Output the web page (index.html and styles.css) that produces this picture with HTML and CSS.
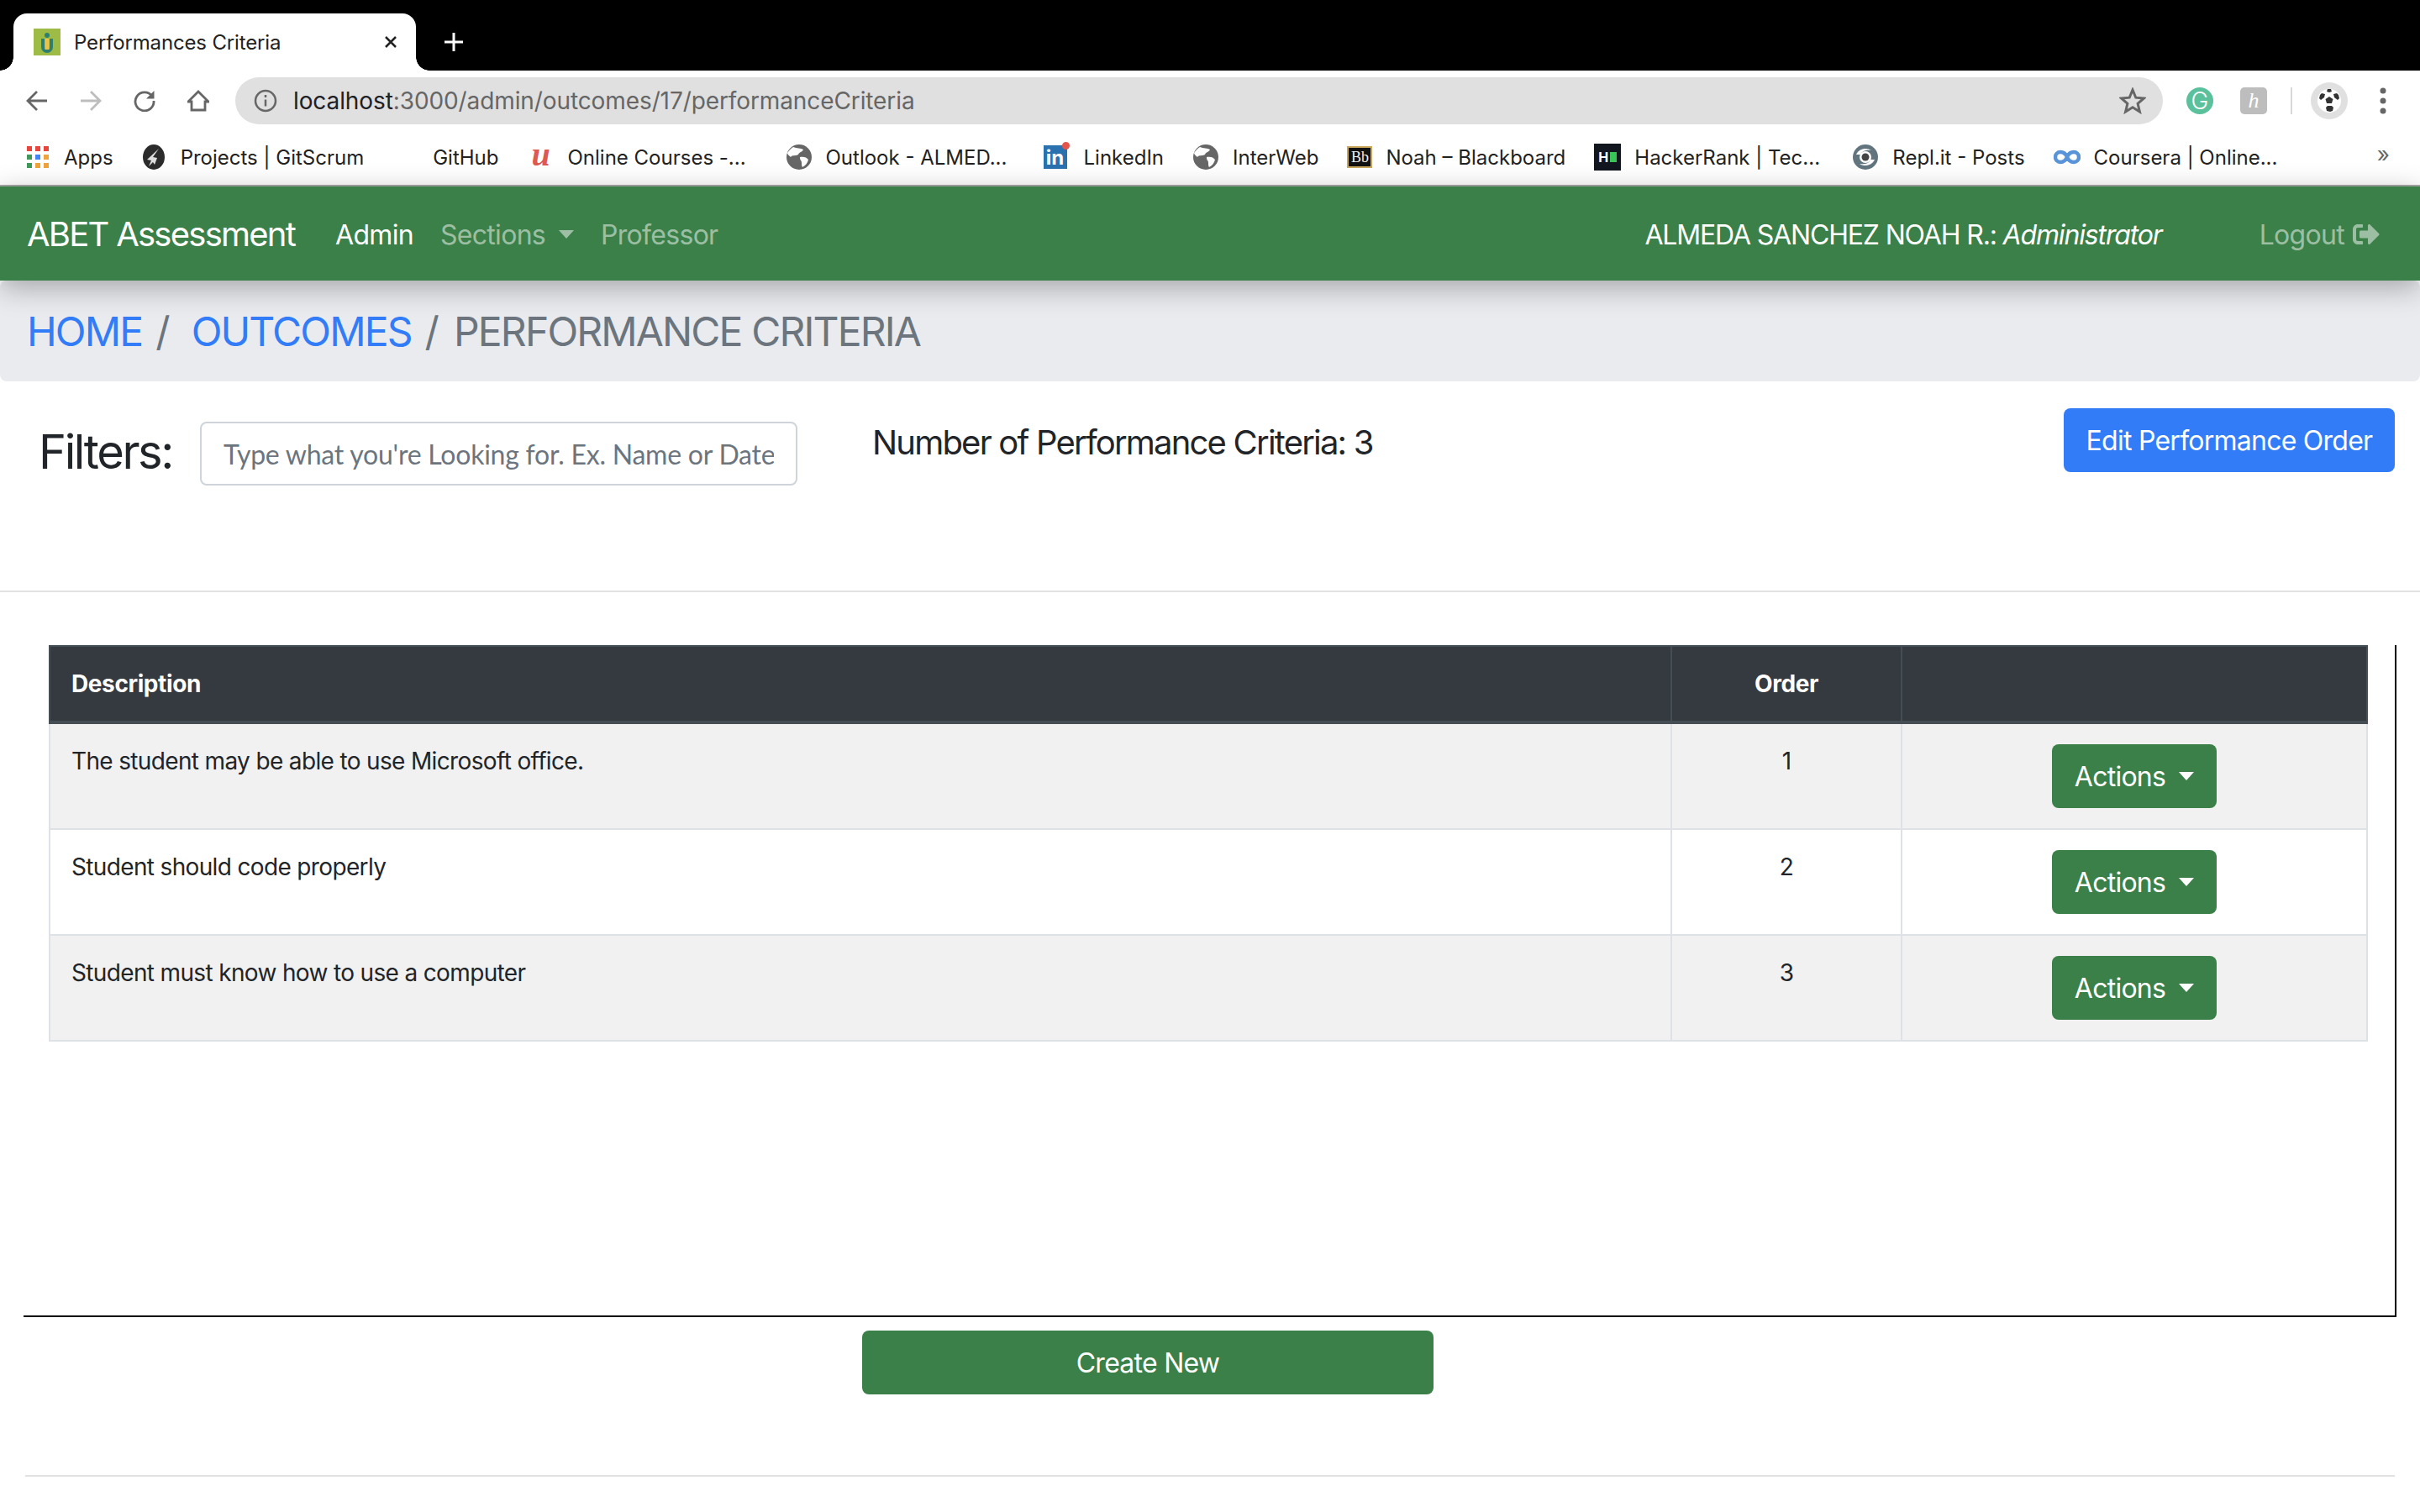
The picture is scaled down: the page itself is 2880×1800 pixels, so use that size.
FILE: index.html
```html
<!DOCTYPE html>
<html lang="en">
<head>
  <meta charset="UTF-8">
  <title>Performances Criteria</title>
  <link rel="stylesheet" href="styles.css">
</head>
<body>

<svg class="defs" width="0" height="0">
  <symbol id="globe" viewBox="0 0 32 32">
    <circle cx="16" cy="16" r="15" fill="#666"/>
    <path d="M9 4c4 2 9 1 12 3-1 3-5 3-6 6-3 2-7 0-9 3-2-2-4-3-4-5 2-3 4-5 7-7zM17 16c4-1 8 0 10 3-1 4-3 7-7 9-2-3 0-6-2-8-1-1-1-3-1-4z" fill="#fff"/>
  </symbol>
</svg>

<!-- browser tabs -->
<div class="tabstrip">
  <div class="tab">
    <svg class="favicon" viewBox="0 0 32 32">
      <rect width="32" height="32" fill="#9dbb45"/>
      <path d="M9 12v10a7 7 0 0 0 14 0V12h-4v10a3 3 0 0 1-6 0V12z" fill="#2f7f6f"/>
      <rect x="13.5" y="12" width="5" height="13" fill="#eec24a"/>
      <circle cx="16" cy="8" r="3" fill="#2f7f6f"/>
    </svg>
    <span class="tab-title">Performances Criteria</span>
    <svg class="tab-close" viewBox="0 0 16 16"><path d="M2 2l12 12M14 2L2 14"/></svg>
  </div>
  <svg class="new-tab" viewBox="0 0 24 24"><path d="M12 1v22M1 12h22"/></svg>
</div>

<!-- url bar -->
<div class="toolbar">
  <div class="nav-btn">
    <svg class="ic" viewBox="0 0 26 26"><path d="M25 13H3M13 2L2 13l11 11"/></svg>
  </div>
  <div class="nav-btn">
    <svg class="ic ic-off" viewBox="0 0 26 26"><path d="M1 13h22M13 2l11 11-11 11"/></svg>
  </div>
  <div class="nav-btn">
    <svg class="ic" viewBox="0 0 26 26">
      <path d="M22 7.5A11 11 0 1 0 24 13"/>
      <path class="ic-solid" d="M24.500 1v9.500H15z"/>
    </svg>
  </div>
  <div class="nav-btn">
    <svg class="ic" viewBox="0 0 26 26"><path d="M13 2L25 14h-4v10H5V14H1z"/></svg>
  </div>
  <div class="urlbar">
    <svg class="url-info" viewBox="0 0 28 28">
      <circle cx="14" cy="14" r="12"/>
      <path d="M14 12.500v8M14 7v3"/>
    </svg>
    <span class="url-text"><span class="url-host">localhost</span>:3000/admin/outcomes/17/performanceCriteria</span>
    <svg class="url-star" viewBox="0 0 32 32"><path d="M16 3l3.800 9.200 9.700.8-7.400 6.400 2.300 9.600L16 23.800 7.600 29l2.300-9.600L2.500 13l9.700-.8z"/></svg>
  </div>
  <div class="ext-icons">
    <span class="ext-grammarly">G</span>
    <span class="ext-honey">h</span>
    <span class="ext-sep"></span>
    <svg class="ext-avatar" viewBox="0 0 44 44">
      <circle cx="22" cy="22" r="22" fill="#e0e0e0"/>
      <circle cx="22" cy="22" r="14" fill="#fff"/>
      <path d="M22 17l4.500 3-1.500 5h-6l-1.500-5zM13 13l4 1-1 4-4 3-2-2 1-4zM31 13l-4 1 1 4 4 3 2-2-1-4zM18 30l2-2h5l2 2-1 4-3 1-4-1zM20 8h4l1 3-3 1-3-1z" fill="#333"/>
    </svg>
    <svg class="ext-menu" viewBox="0 0 8 32">
      <circle cx="4" cy="4" r="3.500"/><circle cx="4" cy="16" r="3.500"/><circle cx="4" cy="28" r="3.500"/>
    </svg>
  </div>
</div>

<!-- bookmarks -->
<div class="bookmarks">
  <div class="bookmark bookmark-apps">
    <svg class="bm-apps" viewBox="0 0 26 26">
      <rect x="0" y="0" width="6" height="6" fill="#e8453c"/><rect x="10" y="0" width="6" height="6" fill="#e8453c"/><rect x="20" y="0" width="6" height="6" fill="#e8453c"/>
      <rect x="0" y="10" width="6" height="6" fill="#3f9a5a"/><rect x="10" y="10" width="6" height="6" fill="#4285f4"/><rect x="20" y="10" width="6" height="6" fill="#eea43a"/>
      <rect x="0" y="20" width="6" height="6" fill="#3f9a5a"/><rect x="10" y="20" width="6" height="6" fill="#eea43a"/><rect x="20" y="20" width="6" height="6" fill="#eea43a"/>
    </svg>
    <span class="bm-label">Apps</span>
  </div>
  <div class="bookmark">
    <svg class="bm-icon" viewBox="0 0 32 32">
      <ellipse cx="16" cy="16" rx="13" ry="15" fill="#2b2b2b"/>
      <path d="M22 6L8 19l5 1-3 7 5-5 2 3 3-8-5-1z" fill="#ddd"/>
    </svg>
    <span class="bm-label">Projects | GitScrum</span>
  </div>
  <div class="bookmark">
    <span class="bm-blank"></span>
    <span class="bm-label">GitHub</span>
  </div>
  <div class="bookmark">
    <span class="bm-udemy">u</span>
    <span class="bm-label bm-long">Online Courses -...</span>
  </div>
  <div class="bookmark">
    <svg class="bm-icon"><use href="#globe"/></svg>
    <span class="bm-label bm-long">Outlook - ALMED...</span>
  </div>
  <div class="bookmark">
    <span class="bm-linkedin">in</span>
    <span class="bm-label">LinkedIn</span>
  </div>
  <div class="bookmark">
    <svg class="bm-icon"><use href="#globe"/></svg>
    <span class="bm-label">InterWeb</span>
  </div>
  <div class="bookmark">
    <span class="bm-bb">Bb</span>
    <span class="bm-label">Noah – Blackboard</span>
  </div>
  <div class="bookmark">
    <span class="bm-hr">H<span class="bm-hr-block"></span></span>
    <span class="bm-label bm-long">HackerRank | Tec...</span>
  </div>
  <div class="bookmark">
    <svg class="bm-icon" viewBox="0 0 32 32">
      <circle cx="16" cy="16" r="15" fill="#62757f"/>
      <path d="M5 13c3-7 12-9 18-5-5-1-11 0-13 5M27 19c-3 7-12 9-18 5 5 1 11 0 13-5" fill="#fff"/>
      <circle cx="16" cy="16" r="7" fill="#fff"/>
      <circle cx="16" cy="16" r="4.500" fill="#444"/>
    </svg>
    <span class="bm-label">Repl.it - Posts</span>
  </div>
  <div class="bookmark">
    <svg class="bm-icon" viewBox="0 0 32 32">
      <path class="bm-coursera" d="M16 16c-2-5-5-6-8-6a6 6 0 0 0 0 12c3 0 6-1 8-6s5-6 8-6a6 6 0 0 1 0 12c-3 0-6-1-8-6z"/>
    </svg>
    <span class="bm-label">Coursera | Online...</span>
  </div>
  <span class="bm-more">»</span>
</div>

<!-- page -->
<nav class="navbar">
  <a class="brand">ABET Assessment</a>
  <a class="nav-link active">Admin</a>
  <a class="nav-link">Sections<span class="caret caret-nav"></span></a>
  <a class="nav-link">Professor</a>
  <span class="nav-user">ALMEDA SANCHEZ NOAH R.: <em>Administrator</em></span>
  <a class="nav-link nav-logout">Logout
    <svg class="logout-icon" viewBox="0 0 512 512"><path d="M497 273L329 441c-15 15-41 4.500-41-17v-96H152c-13.300 0-24-10.700-24-24v-96c0-13.300 10.700-24 24-24h136V88c0-21.400 25.900-32 41-17l168 168c9.300 9.400 9.300 24.600 0 34zM192 436v-40c0-6.600-5.400-12-12-12H96c-17.700 0-32-14.300-32-32V160c0-17.700 14.300-32 32-32h84c6.600 0 12-5.400 12-12V76c0-6.600-5.400-12-12-12H96c-53 0-96 43-96 96v192c0 53 43 96 96 96h84c6.600 0 12-5.400 12-12z"/></svg>
  </a>
</nav>

<div class="breadcrumb">
  <a class="crumb-link">HOME</a>
  <span class="crumb-sep">/</span>
  <a class="crumb-link">OUTCOMES</a>
  <span class="crumb-sep crumb-sep-last">/</span>
  <span class="crumb-current">PERFORMANCE CRITERIA</span>
</div>

<div class="filters">
  <span class="filters-label">Filters:</span>
  <input class="filters-input" type="text" placeholder="Type what you're Looking for. Ex. Name or Date">
  <span class="filters-count">Number of Performance Criteria: 3</span>
  <button class="btn btn-blue btn-order">Edit Performance Order</button>
</div>

<hr class="rule">

<div class="table-box">
  <table class="criteria">
    <colgroup>
      <col class="col-desc">
      <col class="col-order">
      <col class="col-actions">
    </colgroup>
    <thead>
      <tr>
        <th>Description</th>
        <th class="center">Order</th>
        <th></th>
      </tr>
    </thead>
    <tbody>
      <tr>
        <td>The student may be able to use Microsoft office.</td>
        <td class="center">1</td>
        <td class="center"><button class="btn btn-green">Actions<span class="caret"></span></button></td>
      </tr>
      <tr>
        <td>Student should code properly</td>
        <td class="center">2</td>
        <td class="center"><button class="btn btn-green">Actions<span class="caret"></span></button></td>
      </tr>
      <tr>
        <td>Student must know how to use a computer</td>
        <td class="center">3</td>
        <td class="center"><button class="btn btn-green">Actions<span class="caret"></span></button></td>
      </tr>
    </tbody>
  </table>
</div>

<div class="create-row">
  <button class="btn btn-green btn-create">Create New</button>
</div>

<hr class="rule rule-bottom">

</body>
</html>
```

FILE: styles.css
```css
* {
  box-sizing: border-box;
}
html, body {
  margin: 0;
  height: 1800px;
  overflow: hidden;
}
body {
  background-color: #fff;
  color: #212529;
  font-family: Inter, "Liberation Sans", sans-serif;
  font-size: 32px;
}
.defs {
  position: absolute;
}

/* browser chrome */
.tabstrip {
  background-color: #000;
  height: 84px;
  padding: 16px 0 0 16px;
  display: flex;
  align-items: flex-start;
}
.tab {
  position: relative;
  width: 479px;
  height: 68px;
  background-color: #fff;
  border-radius: 16px 16px 0 0;
  display: flex;
  align-items: center;
  padding: 0 22px 0 24px;
}
.tab::before, .tab::after {
  content: "";
  position: absolute;
  bottom: 0;
  width: 16px;
  height: 16px;
}
.tab::before {
  left: -16px;
  background: radial-gradient(circle at 0 0, #000 15.500px, #fff 16px);
}
.tab::after {
  right: -16px;
  background: radial-gradient(circle at 100% 0, #000 15.500px, #fff 16px);
}
.favicon {
  width: 32px;
  height: 32px;
  flex: none;
}
.tab-title {
  margin-left: 16px;
  font-size: 24px;
  letter-spacing: -0.15px;
  color: #222;
  flex: 1;
}
.tab-close {
  width: 16px;
  height: 18px;
  fill: none;
  stroke: #222;
  stroke-width: 2.500;
}
.new-tab {
  width: 24px;
  height: 24px;
  margin: 22px 0 0 33px;
  fill: none;
  stroke: #fff;
  stroke-width: 3;
}
.toolbar {
  height: 76px;
  padding: 8px 0 12px 12px;
  display: flex;
  align-items: center;
}
.nav-btn {
  width: 64px;
  display: flex;
  justify-content: center;
}
.ic {
  width: 26px;
  height: 26px;
  fill: none;
  stroke: #666;
  stroke-width: 2.800;
}
.ic-off {
  stroke: #bdbdbd;
}
.ic-solid {
  fill: #666;
  stroke: none;
}
.urlbar {
  width: 2294px;
  height: 56px;
  margin-left: 12px;
  background-color: #e0e0e0;
  border-radius: 28px;
  display: flex;
  align-items: center;
  padding: 0 20px 0 22px;
}
.url-info {
  width: 28px;
  height: 28px;
  fill: none;
  stroke: #666;
  stroke-width: 2.500;
  flex: none;
}
.url-text {
  margin-left: 19px;
  font-size: 28px;
  letter-spacing: -0.1px;
  color: #666;
  flex: 1;
}
.url-host {
  color: #202124;
}
.url-star {
  width: 32px;
  height: 32px;
  fill: none;
  stroke: #666;
  stroke-width: 3;
}
.ext-icons {
  display: flex;
  align-items: center;
  margin-left: 28px;
}
.ext-grammarly {
  width: 32px;
  height: 32px;
  border-radius: 50%;
  background-color: #5ac19c;
  color: #fff;
  font-size: 28px;
  font-weight: 300;
  line-height: 32px;
  text-align: center;
}
.ext-honey {
  width: 32px;
  height: 32px;
  margin-left: 32px;
  border-radius: 5px;
  background-color: #bdbdbd;
  color: #fff;
  font-family: "Liberation Serif", serif;
  font-style: italic;
  font-size: 26px;
  line-height: 32px;
  text-align: center;
}
.ext-sep {
  width: 2px;
  height: 32px;
  margin-left: 28px;
  background-color: #d8d8d8;
}
.ext-avatar {
  width: 44px;
  height: 44px;
  margin-left: 22px;
}
.ext-menu {
  width: 8px;
  height: 32px;
  margin-left: 38px;
  fill: #666;
}
.bookmarks {
  height: 62px;
  padding: 0 0 6px 32px;
  border-bottom: 2px solid #a8a8a8;
  display: flex;
  align-items: center;
  gap: 34px;
  position: relative;
}
.bookmark {
  display: flex;
  align-items: center;
  gap: 16px;
}
.bookmark-apps {
  gap: 18px;
  margin-right: -2px;
}
.bm-label {
  font-size: 24px;
  color: #222;
  white-space: nowrap;
}
.bm-long {
  min-width: 225px;
}
.bm-apps {
  width: 26px;
  height: 26px;
}
.bm-icon, .bm-blank {
  width: 32px;
  height: 32px;
  flex: none;
}
.bm-udemy {
  width: 32px;
  height: 32px;
  color: #dc5a52;
  font-family: "Liberation Serif", serif;
  font-style: italic;
  font-weight: bold;
  font-size: 40px;
  line-height: 26px;
  text-align: center;
}
.bm-linkedin {
  width: 28px;
  height: 28px;
  margin-right: 4px;
  background-color: #2a71b0;
  color: #fff;
  font-size: 24px;
  font-weight: bold;
  line-height: 30px;
  text-align: center;
  position: relative;
}
.bm-linkedin::after {
  content: "";
  position: absolute;
  top: -4px;
  right: -3px;
  width: 9px;
  height: 9px;
  border-radius: 50%;
  background-color: #e4544a;
}
.bm-bb {
  width: 30px;
  height: 26px;
  background-color: #111;
  border: 2px solid #c9a75b;
  color: #eee;
  font-family: "Liberation Serif", serif;
  font-size: 18px;
  line-height: 22px;
  text-align: center;
}
.bm-hr {
  width: 32px;
  height: 32px;
  background-color: #12171f;
  color: #fff;
  font-size: 16px;
  font-weight: bold;
  display: flex;
  align-items: center;
  justify-content: center;
  gap: 2px;
}
.bm-hr-block {
  width: 8px;
  height: 12px;
  background-color: #39c659;
}
.bm-coursera {
  fill: none;
  stroke: #5a94d8;
  stroke-width: 4.500;
}
.bm-more {
  position: absolute;
  right: 36px;
  top: 8px;
  color: #666;
  font-size: 26px;
}

/* page */
.navbar {
  position: relative;
  z-index: 2;
  height: 112px;
  background-color: #3a8048;
  box-shadow: 0 8px 32px rgba(0,0,0,0.3);
  padding: 0 32px;
  display: flex;
  align-items: center;
}
.brand {
  color: #fff;
  font-size: 40px;
  letter-spacing: -1.75px;
  margin-right: 32px;
}
.nav-link {
  color: rgba(255,255,255,0.5);
  letter-spacing: -0.7px;
  padding: 2px 16px 0;
}
.nav-link.active {
  color: #fff;
}
.nav-user {
  margin-left: auto;
  padding-top: 2px;
  color: #fff;
  letter-spacing: -1.16px;
}
.nav-logout {
  margin-left: 100px;
  display: flex;
  align-items: center;
  gap: 10px;
}
.logout-icon {
  width: 32px;
  height: 32px;
  fill: #9cbea3;
}
.caret {
  display: inline-block;
  margin-left: 16px;
  vertical-align: 7px;
  border-top: 10px solid currentColor;
  border-left: 9.600px solid transparent;
  border-right: 9.600px solid transparent;
}
.breadcrumb {
  height: 120px;
  background-color: #e9ebef;
  border-radius: 8px;
  padding: 0 32px;
  display: flex;
  align-items: center;
  font-size: 48px;
  letter-spacing: -1.85px;
}
.crumb-link {
  color: #337cf8;
}
.crumb-sep {
  color: #6c757d;
  margin: 0 27px 0 16px;
}
.crumb-sep-last {
  margin-right: 19px;
}
.crumb-current {
  color: #6c757d;
}
.filters {
  height: 249px;
  padding: 32px 30px 0 46px;
  display: flex;
  align-items: flex-start;
}
.filters-label {
  font-size: 56px;
  letter-spacing: -2.4px;
  margin-top: 18px;
  flex: none;
  width: 157px;
}
.filters-input {
  flex: none;
  width: 711px;
  height: 76px;
  margin: 16px 0 0 35px;
  border: 2px solid #ced4da;
  border-radius: 8px;
  padding: 0 26px;
  font-family: Lato, sans-serif;
  font-size: 32px;
  letter-spacing: -0.23px;
}
.filters-input::placeholder {
  color: #6c757d;
}
.filters-count {
  font-size: 40px;
  letter-spacing: -1.8px;
  margin: 16px 0 0 89px;
}
.btn {
  height: 76px;
  border: 0;
  border-radius: 8px;
  color: #fff;
  font-family: Inter, "Liberation Sans", sans-serif;
  font-size: 32px;
  letter-spacing: -0.75px;
}
.btn-blue {
  background-color: #337cf8;
}
.btn-green {
  background-color: #3a8048;
}
.btn-order {
  width: 394px;
  margin-left: auto;
}
.rule {
  height: 2px;
  margin: 0;
  border: 0;
  background-color: #e2e2e2;
}
.rule-bottom {
  margin: 96px 30px 0;
}
.table-box {
  height: 800px;
  margin: 63px 28px 0;
  padding-left: 30px;
  border-right: 2px solid #000;
  border-bottom: 2px solid #000;
}
.criteria {
  width: 2760px;
  table-layout: fixed;
  border-collapse: collapse;
  font-size: 28px;
  letter-spacing: -0.65px;
}
.col-order {
  width: 274px;
}
.col-actions {
  width: 554px;
}
.criteria th, .criteria td {
  border: 2px solid #dee2e6;
  padding: 24px 25px;
  line-height: 40px;
  vertical-align: top;
}
.criteria th {
  background-color: #343a40;
  border-color: #454d55;
  border-bottom-width: 4px;
  color: #fff;
  text-align: left;
  letter-spacing: -0.4px;
}
.criteria tbody tr:nth-child(odd) {
  background-color: #f1f1f1;
}
.criteria .center {
  text-align: center;
}
.criteria td .btn {
  width: 196px;
  display: block;
  margin: 0 auto;
}
.create-row {
  padding: 16px 0 0 1026px;
}
.btn-create {
  width: 680px;
}
```
